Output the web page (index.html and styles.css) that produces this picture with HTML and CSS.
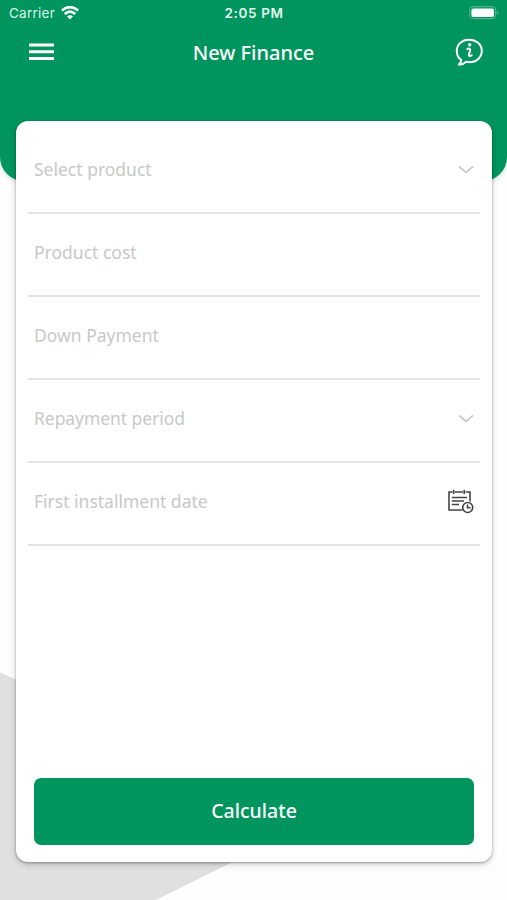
FILE: index.html
```html
<!DOCTYPE html>
<html lang="en">
<head>
<meta charset="utf-8">
<title>New Finance</title>
<link rel="stylesheet" href="styles.css">
</head>
<body>
<div class="screen">
  <svg class="backdrop" viewBox="0 0 507 240" aria-hidden="true"><path d="M0 12.5L26 24L253 192L156 240H0Z" fill="#e0e0e0"/></svg>
  <header class="header">
    <div class="status">
      <div class="carrier"><span>Carrier</span>
        <svg width="18" height="14" viewBox="0 0 18 14" fill="none" stroke="#fff" stroke-width="2.6"><path d="M.8 4.5Q9-2.300 17.2 4.5M3.8 7.9Q9 3.500 14.2 7.900"/><path d="M6 10.3Q9 8 12 10.3L9 13.4Z" fill="#fff" stroke="none"/></svg>
      </div>
      <span class="time">2:05 PM</span>
      <svg class="battery" width="32" height="14" viewBox="0 0 32 14"><rect x=".7" y=".7" width="26" height="12" rx="3.5" fill="none" stroke="#5cbb96"/><rect x="2.4" y="2.4" width="22.6" height="8.6" rx="2" fill="#fff"/><path d="M28.2 4.5Q30.5 6.7 28.2 8.9Z" fill="#5cbb96"/></svg>
    </div>
    <div class="navbar">
      <svg class="menu" width="25" height="18" viewBox="0 0 25 18" fill="#fff"><path d="M0 .5h25v3H0zM0 7.2h25v3H0zM0 14h25v3H0z"/></svg>
      <h1 class="title">New Finance</h1>
      <svg class="info" width="30" height="30" viewBox="0 0 30 30" fill="none" stroke="#fff" stroke-width="2" stroke-linecap="round" stroke-linejoin="round"><path d="M7.3 23C4.4 21 2.8 17.600 2.800 14C2.800 7.400 8 2.700 15 2.700S27.800 7.400 27.800 13.800S22.500 25.200 15.500 25.200C14.300 25.200 13.200 25.100 12.200 24.800C10.300 26.600 7.400 27.800 4.800 27.600C6.300 26.500 7.200 24.900 7.300 23Z"/><path d="M13.200 12.200C15 10.800 16.800 11.500 16.200 13.500L15 17.300C14.500 19.200 16 19.600 17.700 18.200"/><circle cx="15.700" cy="7.700" r=".7" fill="#fff"/></svg>
    </div>
  </header>
  <main class="card">
    <div class="row"><span class="label">Select product</span><svg class="chevron" width="16" height="9" viewBox="0 0 16 9"><path d="M1 1.500l7 6 7-6"/></svg></div>
    <div class="row"><span class="label">Product cost</span></div>
    <div class="row"><span class="label">Down Payment</span></div>
    <div class="row"><span class="label period">Repayment period</span><svg class="chevron" width="16" height="9" viewBox="0 0 16 9"><path d="M1 1.500l7 6 7-6"/></svg></div>
    <div class="row"><span class="label">First installment date</span>
      <svg width="27" height="25" viewBox="0 0 27 25" fill="none" stroke="#444" stroke-width="1.600"><path d="M5.500 3H2V21H15.500M8 3H16M18.500 3H23V12.500M6.700 .8V5M17.200 .8V5M4.800 8.500H20M4.800 12H17M4.800 15.500H12"/><circle cx="20.700" cy="18.500" r="5"/><path d="M20.500 15.500V18.800H23.500"/></svg>
    </div>
    <button class="calculate" type="button">Calculate</button>
  </main>
</div>
</body>
</html>
```
FILE: styles.css
```css
* { box-sizing: border-box; }
body { margin: 0; font-family: "Noto Sans", sans-serif; }
.screen { position: relative; height: 900px; overflow: hidden; background: #fefefe; }
.backdrop { position: absolute; left: 0; bottom: 0; width: 507px; height: 240px; }
.header { height: 181px; background: #00955e; border-radius: 0 0 24px 24px; color: #fff; box-shadow: 0 2px 5px #0002; }
.status { height: 27px; display: grid; grid-template-columns: 1fr auto 1fr; align-items: center; padding: 0 6px 1px 9px; font-family: Inter, sans-serif; }
.carrier { display: flex; align-items: center; gap: 6px; color: #d9f5e8; font-size: 13.500px; letter-spacing: .25px; }
.time { font-weight: 600; font-size: 13.500px; letter-spacing: .65px; color: #e4f8ef; transform: translateX(-1px); }
.battery { justify-self: end; }
.navbar { height: 50px; display: grid; grid-template-columns: 1fr auto 1fr; align-items: center; padding: 0 23px 0 29px; }
.title { margin: 0; font-size: 20px; font-weight: 500; line-height: 28px; transform: translate(-3px, 1px); }
.info { justify-self: end; }
.card { position: relative; width: 476px; height: 741px; margin: -60px 0 0 16px; padding: 10px 12px 17px; display: flex; flex-direction: column; background: #fff; border-radius: 12px; box-shadow: 0 1px 3px #0005, 0 3px 7px #0002; }
.row { height: 83.100px; display: flex; align-items: center; justify-content: space-between; padding: 0 6px 5px; border-bottom: 2px solid #e3e3e3; }
.label { font-size: 17.500px; line-height: 24px; color: #c8c8c8; white-space: nowrap; }
.period { letter-spacing: -.06px; }
.chevron { fill: none; stroke: #c8c8c8; stroke-width: 1.700; }
.calculate { height: 67px; margin: auto 6px 0; padding: 0 0 2px; border: 0; border-radius: 7px; background: #00955e; color: #fff; font: 500 19.500px "Noto Sans", sans-serif; }
```
